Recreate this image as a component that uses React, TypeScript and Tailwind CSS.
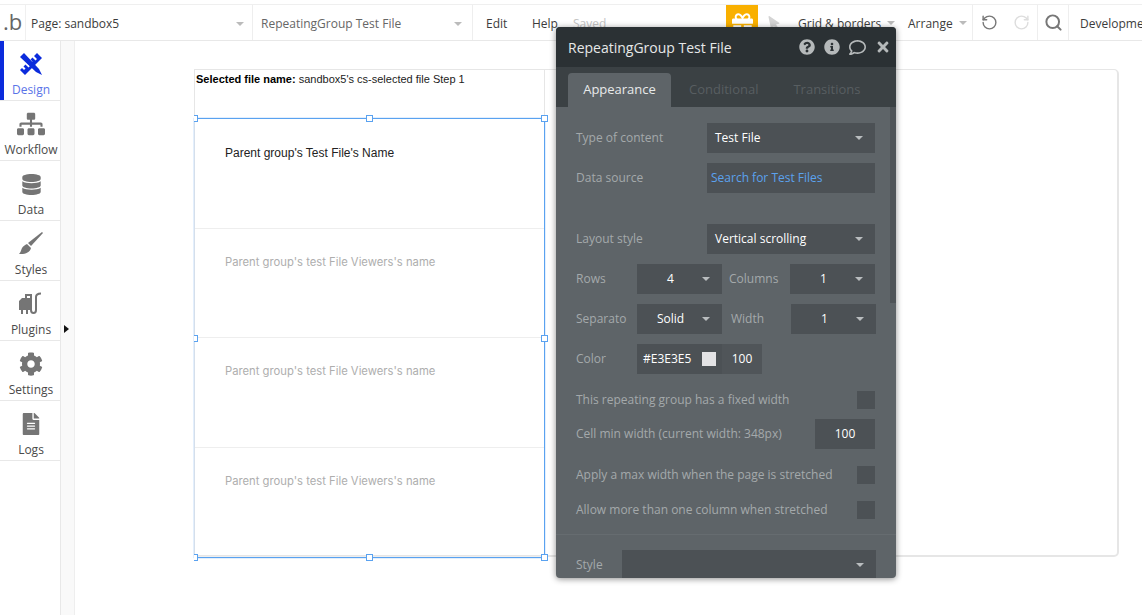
import { FC, ReactNode } from "react";
import {
  FaCog,
  FaDatabase,
  FaFileAlt,
  FaGift,
  FaInfoCircle,
  FaMousePointer,
  FaQuestionCircle,
  FaRegComment,
  FaSitemap,
  FaTimes,
} from "react-icons/fa";
import { RotateCcw, RotateCw, Search } from "lucide-react";

const Caret: FC<{ className?: string }> = ({ className = "border-t-[#c4c8ca]" }) => (
  <span className={`block shrink-0 w-0 h-0 border-x-[4px] border-x-transparent border-t-[4px] ${className}`} />
);

const DesignIcon = () => (
  <svg width="24" height="24" viewBox="0 0 24 24" fill="#0b2bdc">
    {/* ruler */}
    <path d="M18 1l5 5L6 23l-5-5 2-2 2 2 1.500-1.500-2-2 2-2 3 3 1.500-1.500-3-3 2-2 2 2 1.500-1.500-2-2 2-2 3 3 1.500-1.500-3-3z" />
    {/* pencil */}
    <path d="M5 1L1 5l16 15 6 3-3-6z" />
  </svg>
);

const BrushIcon = () => (
  <svg width="24" height="24" viewBox="0 0 24 24" fill="#757575">
    <path d="M23 0l1 1-12 13-3-3z" />
    <path d="M8 12l4 4c-1 4-5 6-10 6H0c2-2 2-4 3-6 1-2 3-3 5-4z" />
  </svg>
);

const PlugIcon = () => (
  <svg width="26" height="24" viewBox="0 0 26 24" fill="none">
    <path d="M1 9l3-3h8v12h-2v4H8v-4H5v4H3v-4H1z" fill="#757575" />
    <path d="M8 6V3h5v15c0 4 5 4 5 0V5c0-2 2-3.500 5-3.500" stroke="#757575" strokeWidth="2" />
  </svg>
);

const NavItem: FC<{ label: string; icon: ReactNode; active?: boolean }> = ({ label, icon, active }) => (
  <div className={`relative h-[60px] flex flex-col items-center border-b border-[#e8e8e8] pt-[10px] pl-[2px] ${active ? "text-[#5a74e8]" : "text-[#4a4a4a]"}`}>
    {active && <span className="absolute left-0 top-0 w-1 h-full bg-[#0b2bdc]" />}
    <div className="h-[26px] flex items-center justify-center">{icon}</div>
    <span className="text-[12px] leading-[18px] mt-[4px]">{label}</span>
  </div>
);

const Field: FC<{ children?: ReactNode; className?: string; caret?: boolean; textClass?: string }> = ({ children, className = "", caret, textClass = "pl-2" }) => (
  <div className={`h-[30px] bg-[#4c5155] flex items-center text-[12px] text-white relative ${className}`}>
    <span className={textClass}>{children}</span>
    {caret && <Caret className="border-t-[#b9bdbf] absolute right-[12px] top-[13px]" />}
  </div>
);

const Label: FC<{ children: ReactNode; className?: string }> = ({ children, className = "" }) => (
  <span className={`text-[12px] leading-[18px] text-[#a4a9ab] whitespace-nowrap ${className}`}>{children}</span>
);

const Check = () => <div className="w-[18px] h-[18px] bg-[#4c5155] ml-auto mr-px" />;

const Handle: FC<{ className: string }> = ({ className }) => (
  <span className={`absolute w-[7px] h-[7px] bg-white border border-[#5aa2f0] ${className}`} />
);

const Cell: FC<{ first?: boolean; text: string }> = ({ first, text }) => (
  <div className={`h-[109.5px] pl-[30px] border-b border-[#eeeeee] last:border-b-0 ${first ? "pt-[26px]" : "pt-[25px]"}`}>
    <p className={first ? "text-[12px] leading-[16px] text-[#222] font-['Liberation_Sans',sans-serif]" : "text-[11.25px] leading-[16px] text-[#aeaeae] font-['Inter',sans-serif]"}>{text}</p>
  </div>
);

const PropertyPanel = () => (
  <div className="absolute left-[556px] top-[27px] w-[340px] h-[551px] rounded-[4px] overflow-hidden bg-[#5e6468] shadow-[0_1px_6px_rgba(0,0,0,0.45)] z-10">
    <div className="h-[40px] bg-[#2b3134] flex items-center pl-3 pr-[5px]">
      <span className="text-[14px] text-[#e6e8e8]">RepeatingGroup Test File</span>
      <div className="ml-auto flex items-center gap-[9px] text-[#b5b9ba]">
        <FaQuestionCircle size={16} />
        <FaInfoCircle size={16} />
        <FaRegComment size={17} />
        <FaTimes size={16} />
      </div>
    </div>
    <div className="h-[40px] bg-[#3b4144] flex items-end pl-3 text-[13px]">
      <div className="w-[103px] h-[34px] bg-[#5e6468] rounded-t-[4px] flex items-center justify-center text-[#e8eaea]">Appearance</div>
      <span className="h-[34px] flex items-center ml-[18px] text-[#585e61]">Conditional</span>
      <span className="h-[34px] flex items-center ml-[35px] text-[#585e61]">Transitions</span>
    </div>
    <div className="relative pl-5 pr-5 pt-4">
      <div className="absolute right-0 top-0 w-[6px] h-[196px] bg-[#4f5458]" />
      <div className="flex items-center">
        <Label className="w-[131px]">Type of content</Label>
        <Field caret className="w-[168px]">Test File</Field>
      </div>
      <div className="flex items-center mt-[10px]">
        <Label className="w-[131px]">Data source</Label>
        <Field className="w-[168px] !text-[#5ba2ee]" textClass="pl-1">Search for Test Files</Field>
      </div>
      <div className="flex items-center mt-[31px]">
        <Label className="w-[131px]">Layout style</Label>
        <Field caret className="w-[168px]">Vertical scrolling</Field>
      </div>
      <div className="flex items-center mt-[10px]">
        <Label className="w-[61px]">Rows</Label>
        <Field caret className="w-[85px]" textClass="w-full text-center pr-[18px]">4</Field>
        <Label className="w-[61px] ml-[7px]">Columns</Label>
        <Field caret className="w-[85px]" textClass="w-full text-center pr-[18px]">1</Field>
      </div>
      <div className="flex items-center mt-[10px]">
        <Label className="w-[61px]">Separato</Label>
        <Field caret className="w-[85px]" textClass="w-full text-center pr-[18px]">Solid</Field>
        <Label className="w-[60px] ml-[9px]">Width</Label>
        <Field caret className="w-[85px]" textClass="w-full text-center pr-[18px]">1</Field>
      </div>
      <div className="flex items-center mt-[10px]">
        <Label className="w-[61px]">Color</Label>
        <div className="h-[30px] w-[85px] bg-[#4c5155] flex items-center pl-[6px] text-[12px] text-white">
          #E3E3E5
          <span className="w-[14px] h-[14px] bg-[#e3e3e5] ml-[11px]" />
        </div>
        <div className="h-[30px] w-[40px] bg-[#505559] flex items-center justify-center text-[12px] text-white">100</div>
      </div>
      <div className="flex items-center mt-[17px]">
        <Label>This repeating group has a fixed width</Label>
        <Check />
      </div>
      <div className="flex items-center mt-[10px]">
        <Label>Cell min width (current width: 348px)</Label>
        <Field className="w-[60px] ml-auto mr-px" textClass="w-full text-center">100</Field>
      </div>
      <div className="flex items-center mt-[17px]">
        <Label>Apply a max width when the page is stretched</Label>
        <Check />
      </div>
      <div className="flex items-center mt-[17px]">
        <Label>Allow more than one column when stretched</Label>
        <Check />
      </div>
    </div>
    <div className="border-t border-[#666c70] mt-[15px] pt-[15px] pl-5 pr-5 flex items-center">
      <Label className="w-[46px]">Style</Label>
      <Field caret className="w-[254px]" />
    </div>
  </div>
);

export default function App() {
  return (
    <div className="relative w-[1142px] h-[615px] overflow-hidden bg-white font-['Open_Sans',sans-serif]">
      <div className="h-[5px] border-b border-[#efefef]" />
      <header className="h-[36px] flex items-center border-b border-[#e8e8e8] text-[12px] text-[#3c3c3c] whitespace-nowrap overflow-hidden [&>*]:shrink-0">
        <span className="w-[26px] h-full flex items-center pl-[3px] text-[22px] leading-none text-[#666] border-r border-[#f0f0f0]">
          <span className="-mt-[4px]">.b</span>
        </span>
        <div className="w-[227px] h-full flex items-center pl-[5px] pr-[8px] pt-[2px] border-r border-[#eeeeee]">
          <span>Page: sandbox5</span>
          <Caret className="border-t-[#bbbbbb] ml-auto" />
        </div>
        <div className="w-[220px] h-full flex items-center pl-[8px] pr-[10px] pt-[2px] border-r border-[#eeeeee] text-[#666]">
          <span>RepeatingGroup Test File</span>
          <Caret className="border-t-[#bbbbbb] ml-auto" />
        </div>
        <span className="w-[46px] ml-[13px] mt-[2px]">Edit</span>
        <span className="w-[41px] mt-[2px]">Help</span>
        <span className="w-[153px] mt-[2px] text-[#c4c4c4]">Saved</span>
        <div className="w-[32px] h-full bg-[#f9b000] flex items-center justify-center text-white">
          <FaGift size={21} />
        </div>
        <FaMousePointer size={15} className="ml-[9px] text-[#d4d4d4] -rotate-12" />
        <span className="w-[89px] ml-[16px] mt-[2px]">Grid &amp; borders</span>
        <Caret className="border-t-[#bbbbbb]" />
        <span className="w-[51px] ml-[13px] mt-[2px]">Arrange</span>
        <Caret className="border-t-[#bbbbbb]" />
        <div className="ml-[5px] w-[66px] h-full flex items-center justify-center gap-[15px] border-x border-[#eeeeee]">
          <RotateCcw size={17} className="text-[#777]" />
          <RotateCw size={17} className="text-[#ddd]" />
        </div>
        <div className="w-[31px] h-full flex items-center justify-center border-r border-[#eeeeee]">
          <Search size={19} strokeWidth={2.5} className="text-[#777]" />
        </div>
        <span className="ml-[11px] mt-[2px]">Development</span>
      </header>
      <div className="flex h-[574px]">
        <aside className="w-[61px] shrink-0 border-r border-[#e8e8e8]">
          <NavItem active label="Design" icon={<DesignIcon />} />
          <NavItem label="Workflow" icon={<FaSitemap size={28} className="text-[#757575]" />} />
          <NavItem label="Data" icon={<FaDatabase size={21} className="text-[#757575]" />} />
          <NavItem label="Styles" icon={<BrushIcon />} />
          <NavItem label="Plugins" icon={<PlugIcon />} />
          <NavItem label="Settings" icon={<FaCog size={24} className="text-[#757575]" />} />
          <NavItem label="Logs" icon={<FaFileAlt size={22} className="text-[#757575]" />} />
        </aside>
        <div className="w-[14px] shrink-0 bg-[#f9f9f9] border-r border-[#eeeeee] pt-[284px] pl-[3px]">
          <span className="block w-0 h-0 border-y-[4px] border-y-transparent border-l-[5px] border-l-[#111]" />
        </div>
        <main className="flex-1 pl-[119px] pt-[28px] pr-[23px]">
          <div className="h-[488px] border border-[#e6e6e6] border-r-2 border-b-2 rounded-r-[5px] relative">
            <p className="pt-[2px] pl-px text-[11px] leading-[14px] text-[#222] font-['Liberation_Sans',sans-serif]">
              <b className="text-black">Selected file name:</b> sandbox5's cs-selected file Step 1
            </p>
            <div className="absolute left-0 top-0 w-[350px] h-[49px] border-r border-[#e6e6e6]" />
            <div className="absolute -left-px top-[48px] w-[351px] h-[440px] border border-[#5aa2f0] border-l-[#d5dfeb] shadow-[0_0_1px_#5aa2f0]">
              <Cell first text="Parent group's Test File's Name" />
              <Cell text="Parent group's test File Viewers's name" />
              <Cell text="Parent group's test File Viewers's name" />
              <Cell text="Parent group's test File Viewers's name" />
              <Handle className="-left-px -top-[4px] !w-[4px] border-l-0" />
              <Handle className="left-[171px] -top-[4px]" />
              <Handle className="-right-[4px] -top-[4px]" />
              <Handle className="-left-px top-[216px] !w-[4px] border-l-0" />
              <Handle className="-right-[4px] top-[216px]" />
              <Handle className="-left-px -bottom-[4px] !w-[4px] border-l-0" />
              <Handle className="left-[171px] -bottom-[4px]" />
              <Handle className="-right-[4px] -bottom-[4px]" />
            </div>
          </div>
        </main>
      </div>
      <PropertyPanel />
    </div>
  );
}
